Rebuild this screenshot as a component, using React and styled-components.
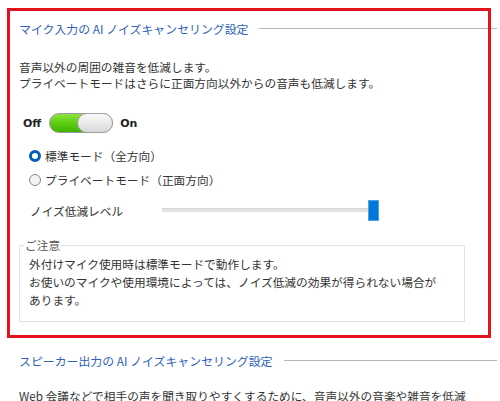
import React from "react";
import styled, { createGlobalStyle } from "styled-components";

const Global = createGlobalStyle`
  html, body { margin: 0; padding: 0; background: #fff; }
  body {
    font-family: "Noto Sans CJK JP", "Noto Sans", sans-serif;
    color: #333;
    font-size: 11.7px;
    overflow: hidden;
  }
`;

const Page = styled.div`
  position: relative;
  width: 500px;
  height: 401px;
  overflow: hidden;
  padding: 19px 3px 0 19px;
  box-sizing: border-box;
`;

const Heading = styled.div`
  display: flex;
  align-items: center;
  gap: 11px;
  height: 20px;
  line-height: 20px;
  color: #2f62b8;
  font-size: 11.9px;
  margin-top: ${(p) => p.$mt || 0}px;
  white-space: nowrap;
  &::after {
    content: "";
    flex: 1;
    height: 1px;
    background: #b4b4b4;
    margin-top: -1px;
  }
`;

const Para = styled.p`
  margin: ${(p) => p.$mt || 0}px 0 0 0;
  line-height: 16px;
  white-space: nowrap;
`;

const ToggleRow = styled.div`
  display: flex;
  align-items: center;
  height: 20px;
  margin: 22px 0 0 4px;
  font-weight: bold;
  font-family: "DejaVu Sans", "Noto Sans", sans-serif;
  font-size: 11px;
  color: #222;
`;

const Switch = styled.div`
  position: relative;
  width: 64px;
  height: 20px;
  margin: 0 7px 0 8px;
  border-radius: 11px;
  box-sizing: border-box;
  border: 1px solid #9a9a9a;
  background: linear-gradient(to bottom, #8fe43e 0%, #5ccd12 50%, #3fb400 100%);
`;

const Knob = styled.div`
  position: absolute;
  top: -1px;
  right: -1px;
  width: 36px;
  height: 20px;
  box-sizing: border-box;
  border-radius: 10px;
  border: 1px solid #a0a0a0;
  background: linear-gradient(to bottom, #fafafa 0%, #e6e6e6 60%, #d8d8d8 100%);
`;

const RadioGroup = styled.div`
  margin: 11px 0 0 10px;
  display: flex;
  flex-direction: column;
`;

const RadioRow = styled.label`
  display: flex;
  align-items: center;
  gap: 4px;
  height: 24px;
  line-height: 24px;
  white-space: nowrap;
`;

const RadioDot = styled.span`
  width: 12px;
  height: 12px;
  box-sizing: border-box;
  border-radius: 50%;
  border: ${(p) => (p.$on ? "3.5px solid #005fb8" : "1px solid #8a8a8a")};
  background: ${(p) => (p.$on ? "#fff" : "#f3f3f3")};
  flex: none;
`;

const SliderRow = styled.div`
  display: flex;
  align-items: center;
  height: 22px;
  margin: 7px 0 0 11px;
  white-space: nowrap;
`;

const SliderLabel = styled.span`
  width: 132px;
  flex: none;
`;

const Track = styled.div`
  position: relative;
  width: 217px;
  height: 4px;
  background: #e2e2e2;
  border-top: 1px solid #d6d6d6;
  box-sizing: border-box;
`;

const Thumb = styled.div`
  position: absolute;
  top: -9px;
  left: 0;
  width: 11px;
  height: 21px;
  box-sizing: border-box;
  background: #0078d7;
  border: 1px solid #4fa3e6;
`;

const Fieldset = styled.fieldset`
  margin: 16px 0 0 0;
  width: 446px;
  box-sizing: border-box;
  border: 1px solid #e2e2e2;
  padding: 2px 9px 12px 9px;
  line-height: 18px;
`;

const Legend = styled.legend`
  padding: 0 1px;
  margin-left: -5px;
  line-height: 16px;
  color: #555;
`;

const Line = styled.div`
  white-space: nowrap;
`;

const Highlight = styled.div`
  position: absolute;
  left: 7px;
  top: 8px;
  width: 484px;
  height: 330px;
  box-sizing: border-box;
  border: 3px solid #e4141c;
  pointer-events: none;
`;

export default function App() {
  const value = 1;
  return (
    <>
      <Global />
      <Page>
        <Heading>マイク入力の AI ノイズキャンセリング設定</Heading>
        <Para $mt={20}>
          音声以外の周囲の雑音を低減します。
          <br />
          プライベートモードはさらに正面方向以外からの音声も低減します。
        </Para>
        <ToggleRow>
          Off
          <Switch>
            <Knob />
          </Switch>
          On
        </ToggleRow>
        <RadioGroup>
          <RadioRow>
            <RadioDot $on />
            標準モード（全方向）
          </RadioRow>
          <RadioRow>
            <RadioDot />
            プライベートモード（正面方向）
          </RadioRow>
        </RadioGroup>
        <SliderRow>
          <SliderLabel>ノイズ低減レベル</SliderLabel>
          <Track>
            <Thumb style={{ left: `${value * 217 - 11}px` }} />
          </Track>
        </SliderRow>
        <Fieldset>
          <Legend>ご注意</Legend>
          <Line>外付けマイク使用時は標準モードで動作します。</Line>
          <Line>お使いのマイクや使用環境によっては、ノイズ低減の効果が得られない場合が</Line>
          <Line>あります。</Line>
        </Fieldset>
        <Heading $mt={29}>スピーカー出力の AI ノイズキャンセリング設定</Heading>
        <Para $mt={17}>
          Web 会議などで相手の声を聞き取りやすくするために、音声以外の音楽や雑音を低減
        </Para>
        <Highlight />
      </Page>
    </>
  );
}
